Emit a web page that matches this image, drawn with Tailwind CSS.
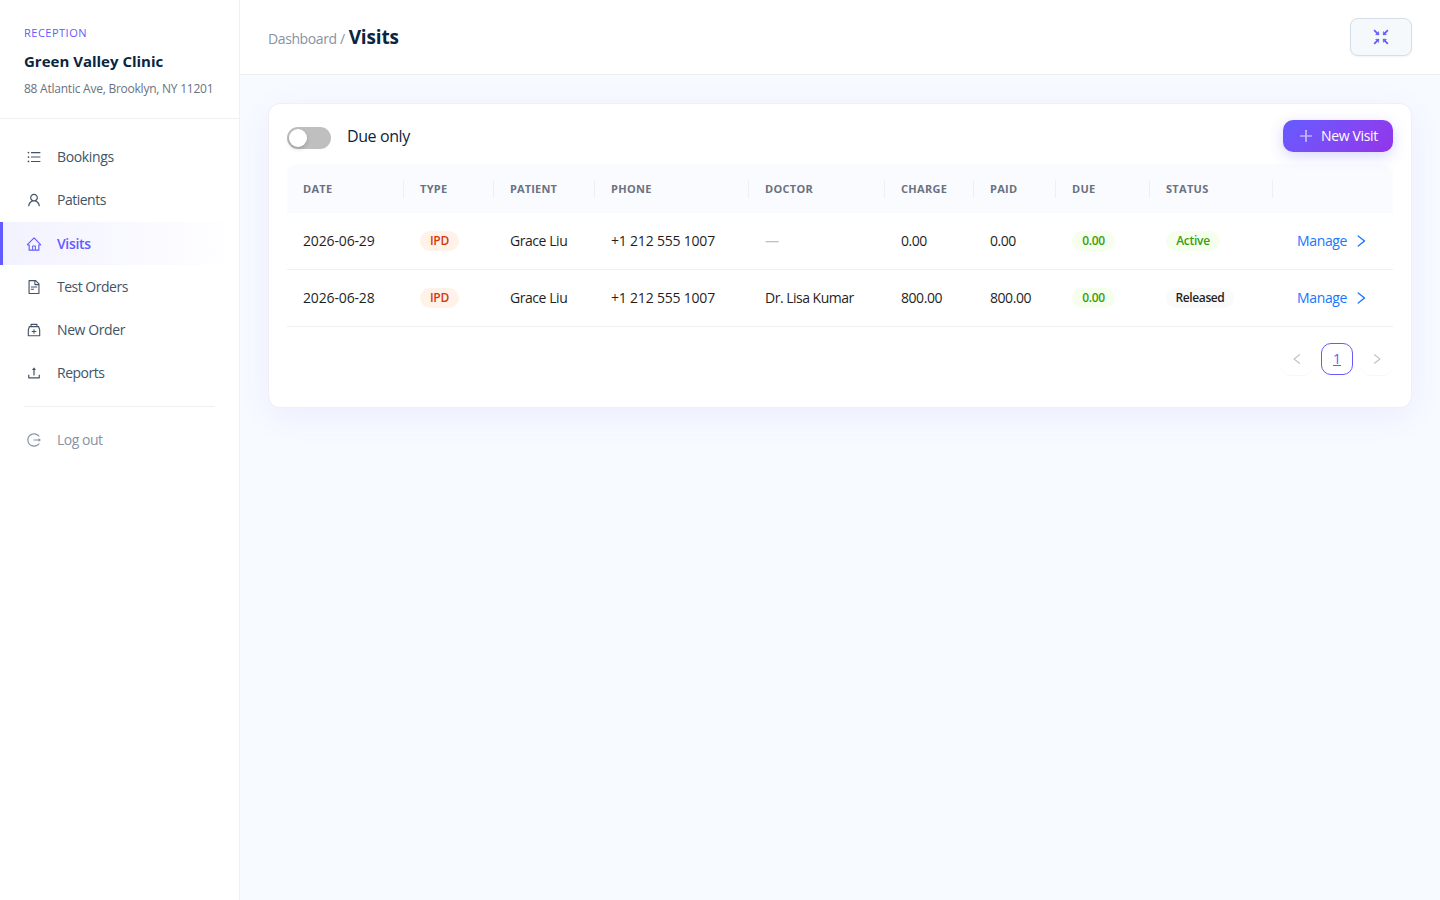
<!DOCTYPE html>
<html lang="en">
<head>
    <meta charset="UTF-8">
    <meta name="viewport" content="width=device-width, initial-scale=1.0">
    <title>Visits - Green Valley Clinic</title>
    <script src="https://cdn.jsdelivr.net/npm/@tailwindcss/browser@4"></script>
</head>
<body class="flex h-screen overflow-hidden bg-[#f7faff] font-['Open_Sans',sans-serif] text-sm text-[#1f1f1f]">
    <!-- Sidebar -->
    <aside class="w-60 shrink-0 border-r border-[#f0f0f0] bg-white">
        <div class="flex h-[119px] flex-col border-b border-[#edeff3] px-6 pt-6 whitespace-nowrap">
            <p class="text-[11px] leading-[18px] font-medium tracking-[0.5px] text-[#635bff]">RECEPTION</p>
            <h1 class="mt-[7px] text-[15px] leading-6 font-bold text-[#0a2540]">Green Valley Clinic</h1>
            <p class="mt-[6px] text-xs leading-[19px] tracking-[-0.24px] text-[#6b7280]">88 Atlantic Ave, Brooklyn, NY 11201</p>
        </div>
        <nav class="pt-[16.6px] tracking-[-0.5px] text-[#425466]">
            <a class="flex h-[43.2px] items-center gap-[15px] pl-[26px]">
                <svg class="size-4" viewBox="0 0 1024 1024" fill="currentColor"><path d="M912 192H328c-4.4 0-8 3.6-8 8v56c0 4.4 3.6 8 8 8h584c4.4 0 8-3.6 8-8v-56c0-4.4-3.6-8-8-8zm0 284H328c-4.4 0-8 3.6-8 8v56c0 4.4 3.6 8 8 8h584c4.4 0 8-3.6 8-8v-56c0-4.4-3.6-8-8-8zm0 284H328c-4.4 0-8 3.6-8 8v56c0 4.4 3.6 8 8 8h584c4.4 0 8-3.6 8-8v-56c0-4.4-3.6-8-8-8zM104 228a56 56 0 10112 0 56 56 0 10-112 0zm0 284a56 56 0 10112 0 56 56 0 10-112 0zm0 284a56 56 0 10112 0 56 56 0 10-112 0z"/></svg>
                <span class="tracking-[-0.35px]">Bookings</span>
            </a>
            <a class="flex h-[43.2px] items-center gap-[15px] pl-[26px]">
                <svg class="size-4" viewBox="0 0 1024 1024" fill="currentColor"><path d="M858.5 763.6a374 374 0 00-80.6-119.5 375.63 375.63 0 00-119.5-80.6c-.4-.2-.8-.3-1.2-.5C719.5 518 760 444.7 760 362c0-137-111-248-248-248S264 225 264 362c0 82.7 40.5 156 102.8 201.1-.4.2-.8.3-1.2.5-44.8 18.9-85 46-119.5 80.6a375.63 375.63 0 00-80.6 119.5A371.7 371.7 0 00136 901.8a8 8 0 008 8.2h60c4.4 0 7.9-3.5 8-7.8 2-77.2 33-149.5 87.8-204.3 56.7-56.7 132-87.9 212.2-87.9s155.5 31.2 212.2 87.9C779 752.7 810 825 812 902.2c.1 4.4 3.6 7.8 8 7.8h60a8 8 0 008-8.2c-1-47.8-10.9-94.3-29.5-138.2zM512 534c-45.9 0-89.1-17.9-121.6-50.4S340 407.9 340 362c0-45.9 17.9-89.1 50.4-121.6S466.1 190 512 190s89.1 17.9 121.6 50.4S684 316.1 684 362c0 45.9-17.9 89.1-50.4 121.6S557.9 534 512 534z"/></svg>
                <span>Patients</span>
            </a>
            <a class="flex h-[43.2px] items-center gap-[15px] border-l-3 border-[#635bff] bg-linear-to-r from-[#635bff]/8 to-transparent pl-[23px] font-semibold text-[#635bff]">
                <svg class="size-4" viewBox="0 0 1024 1024" fill="currentColor"><path d="M946.5 505L560.1 118.8l-25.9-25.9a31.5 31.5 0 00-44.4 0L77.5 505a63.9 63.9 0 00-18.8 46c.4 35.2 29.7 63.3 64.9 63.3h42.5V940h691.8V614.3h43.4c17.1 0 33.2-6.7 45.3-18.8a63.6 63.6 0 0018.7-45.3c0-17-6.7-33.1-18.8-45.2zM568 868H456V664h112v204zm217.9-325.7V868H632V640c0-22.1-17.9-40-40-40H432c-22.1 0-40 17.9-40 40v228H238.1V542.3h-96l370-369.7 23.1 23.1L882 542.3h-96.1z"/></svg>
                <span class="pt-px tracking-[-0.35px]">Visits</span>
            </a>
            <a class="flex h-[43.2px] items-center gap-[15px] pl-[26px]">
                <svg class="size-4" viewBox="0 0 1024 1024" fill="currentColor"><path d="M854.6 288.6L639.4 73.4c-6-6-14.1-9.4-22.6-9.4H192c-17.7 0-32 14.3-32 32v832c0 17.7 14.3 32 32 32h640c17.7 0 32-14.3 32-32V311.3c0-8.5-3.4-16.7-9.4-22.7zM790.2 326H602V137.8L790.2 326zm1.8 562H232V136h302v216a42 42 0 0042 42h216v494zM504 618H320c-4.4 0-8 3.6-8 8v48c0 4.4 3.6 8 8 8h184c4.4 0 8-3.6 8-8v-48c0-4.4-3.6-8-8-8zM312 490v48c0 4.4 3.6 8 8 8h384c4.4 0 8-3.6 8-8v-48c0-4.4-3.6-8-8-8H320c-4.4 0-8 3.6-8 8z"/></svg>
                <span>Test Orders</span>
            </a>
            <a class="flex h-[43.2px] items-center gap-[15px] pl-[26px]">
                <svg class="size-4" viewBox="0 0 1024 1024" fill="currentColor"><path d="M839.2 278.1a32 32 0 00-30.4-22.1H736V144c0-17.7-14.3-32-32-32H320c-17.7 0-32 14.3-32 32v112h-72.8a31.9 31.9 0 00-30.4 22.1L112 502v378c0 17.7 14.3 32 32 32h736c17.7 0 32-14.3 32-32V502l-72.8-223.9zM360 184h304v72H360v-72zm480 656H184V513.4L244.3 328h535.4L840 513.4V840zM652 572H544V464c0-4.4-3.6-8-8-8h-48c-4.4 0-8 3.6-8 8v108H372c-4.4 0-8 3.6-8 8v48c0 4.4 3.6 8 8 8h108v108c0 4.4 3.6 8 8 8h48c4.4 0 8-3.6 8-8V636h108c4.4 0 8-3.6 8-8v-48c0-4.4-3.6-8-8-8z"/></svg>
                <span class="tracking-[-0.4px]">New Order</span>
            </a>
            <a class="flex h-[43.2px] items-center gap-[15px] pl-[26px]">
                <svg class="size-4" viewBox="0 0 1024 1024" fill="currentColor"><path d="M400 317.7h73.9V656c0 4.4 3.6 8 8 8h60c4.4 0 8-3.6 8-8V317.7H624c6.7 0 10.4-7.7 6.3-12.9L518.3 163a8 8 0 00-12.6 0l-112 141.7c-4.1 5.3-.4 13 6.3 13zM878 626h-60c-4.4 0-8 3.6-8 8v154H214V634c0-4.4-3.6-8-8-8h-60c-4.4 0-8 3.6-8 8v198c0 17.7 14.3 32 32 32h684c17.7 0 32-14.3 32-32V634c0-4.4-3.6-8-8-8z"/></svg>
                <span>Reports</span>
            </a>
            <hr class="mx-6 mt-[11px] mb-3 border-[#edeff2]">
            <a class="flex h-[43.2px] items-center gap-[15px] pl-[26px] text-[#8792a2]">
                <svg class="size-4" viewBox="0 0 1024 1024" fill="currentColor"><path d="M868 732h-70.3c-4.8 0-9.3 2.1-12.3 5.8-7 8.5-14.5 16.7-22.4 24.5a353.84 353.84 0 01-112.7 75.9A352.8 352.8 0 01512.4 866c-47.9 0-94.3-9.4-137.9-27.8a353.84 353.84 0 01-112.7-75.9 353.28 353.28 0 01-76-112.5C167.3 606.2 158 559.9 158 512s9.4-94.2 27.8-137.8c17.8-42.1 43.4-80 76-112.5s70.5-58.1 112.7-75.9c43.6-18.4 90-27.8 137.9-27.8 47.9 0 94.3 9.3 137.9 27.8 42.2 17.8 80.1 43.4 112.7 75.9 7.9 7.9 15.3 16.1 22.4 24.5 3 3.7 7.6 5.8 12.3 5.8H868c6.3 0 10.2-7 6.7-12.3C798 160.5 663.8 81.6 511.3 82 271.7 82.6 79.6 277.1 82 516.4 84.4 751.9 276.2 942 512.4 942c152.1 0 285.7-78.8 362.3-197.7 3.4-5.3-.4-12.3-6.7-12.3zm88.9-226.3L815 393.7c-5.3-4.2-13-.4-13 6.3v76H488c-4.4 0-8 3.6-8 8v56c0 4.4 3.6 8 8 8h314v76c0 6.7 7.8 10.5 13 6.3l141.9-112a8 8 0 000-12.6z"/></svg>
                <span>Log out</span>
            </a>
        </nav>
    </aside>

    <div class="flex min-w-0 flex-1 flex-col">
        <!-- Top bar -->
        <header class="flex h-[75px] shrink-0 items-center justify-between border-b border-[#edeff3] bg-white px-7">
            <div class="flex items-baseline gap-1 whitespace-nowrap">
                <span class="tracking-[-0.4px] text-[#8792a2]">Dashboard /</span>
                <h2 class="text-[19px] leading-7 font-bold tracking-[-0.15px] text-[#0a2540]">Visits</h2>
            </div>
            <button class="flex h-[38px] w-[62px] items-center justify-center rounded-lg border border-[#d5dfea] bg-[#f6f9fc] text-[#635bff] shadow-[0_1px_2px_rgba(10,37,64,0.06)]">
                <svg class="size-5" viewBox="0 0 1024 1024" fill="currentColor" stroke="currentColor" stroke-width="20"><path d="M391 240.9c-.8-6.6-8.9-9.4-13.6-4.7l-43.7 43.7L200 146.3a8.03 8.03 0 00-11.3 0l-42.4 42.3a8.03 8.03 0 000 11.3L280 333.6l-43.9 43.9a8.01 8.01 0 004.7 13.6L401 410c5.1.6 9.5-3.7 8.9-8.9L391 240.9zm10.1 373.2L240.8 633c-6.6.8-9.4 8.9-4.7 13.6l43.9 43.9L146.3 824a8.03 8.03 0 000 11.3l42.4 42.3c3.1 3.1 8.2 3.1 11.3 0L333.7 744l43.7 43.7A8.01 8.01 0 00391 783l18.9-160.1c.6-5.1-3.7-9.4-8.8-8.8zm221.8-204.2L783.2 391c6.6-.8 9.4-8.9 4.7-13.6L744 333.6 877.7 200c3.1-3.1 3.1-8.2 0-11.3l-42.4-42.3a8.03 8.03 0 00-11.3 0L690.3 279.9l-43.7-43.7a8.01 8.01 0 00-13.6 4.7L614.1 401c-.6 5.2 3.7 9.5 8.8 8.9zM744 690.4l43.9-43.9a8.01 8.01 0 00-4.7-13.6L623 614c-5.1-.6-9.5 3.7-8.9 8.9L633 783.1c.8 6.6 8.9 9.4 13.6 4.7l43.7-43.7L824 877.7c3.1 3.1 8.2 3.1 11.3 0l42.4-42.3c3.1-3.1 3.1-8.2 0-11.3L744 690.4z"/></svg>
            </button>
        </header>

        <main class="px-7 pt-7">
            <section class="h-[305px] rounded-xl border border-[#eef0f6] bg-white px-[18px] pt-4 shadow-[0_8px_32px_rgba(99,91,255,0.08)]">
                <div class="flex h-[44px] items-start justify-between">
                    <div class="flex items-center gap-4">
                        <button class="mt-[3px] flex h-[22px] w-11 items-center rounded-full bg-[#bfbfbf] pl-0.5">
                            <span class="size-[18px] rounded-full bg-white shadow-[0_2px_4px_rgba(0,35,11,0.2)]"></span>
                        </button>
                        <span class="text-base leading-8 tracking-[-0.4px] text-[#0a2540]">Due only</span>
                    </div>
                    <button class="flex h-8 w-[110px] items-center justify-center gap-[7px] rounded-[10px] bg-linear-135 from-[#635bff] to-[#9333ea] text-white shadow-[0_4px_14px_rgba(99,91,255,0.25)]">
                        <svg class="size-4" viewBox="0 0 1024 1024" fill="currentColor" fill-opacity="0.85"><path d="M482 132h60q8 0 8 8v744q0 8-8 8h-60q-8 0-8-8V140q0-8 8-8z"/><path d="M140 474h334v76H140q-8 0-8-8v-60q0-8 8-8zM550 474h334q8 0 8 8v60q0 8-8 8H550z"/></svg>
                        <span class="tracking-[-0.35px] whitespace-nowrap">New Visit</span>
                    </button>
                </div>

                <table class="w-[1106px] table-fixed border-separate border-spacing-0 whitespace-nowrap">
                    <colgroup>
                        <col class="w-[117px]">
                        <col class="w-[90px]">
                        <col class="w-[101px]">
                        <col class="w-[154px]">
                        <col class="w-[136px]">
                        <col class="w-[89px]">
                        <col class="w-[82px]">
                        <col class="w-[94px]">
                        <col class="w-[123px]">
                        <col class="w-[120px]">
                    </colgroup>
                    <thead>
                        <tr class="h-[49px] text-left text-[11px] tracking-[0.3px] text-[#6b7280]">
                            <th class="rounded-tl-xl bg-[#fafbff] p-0"><div class="flex h-[18px] items-center border-r border-[#f0f0f0] pl-4">DATE</div></th>
                            <th class="bg-[#fafbff] p-0"><div class="flex h-[18px] items-center border-r border-[#f0f0f0] pl-4">TYPE</div></th>
                            <th class="bg-[#fafbff] p-0"><div class="flex h-[18px] items-center border-r border-[#f0f0f0] pl-4 tracking-[0.15px]">PATIENT</div></th>
                            <th class="bg-[#fafbff] p-0"><div class="flex h-[18px] items-center border-r border-[#f0f0f0] pl-4">PHONE</div></th>
                            <th class="bg-[#fafbff] p-0"><div class="flex h-[18px] items-center border-r border-[#f0f0f0] pl-4">DOCTOR</div></th>
                            <th class="bg-[#fafbff] p-0"><div class="flex h-[18px] items-center border-r border-[#f0f0f0] pl-4">CHARGE</div></th>
                            <th class="bg-[#fafbff] p-0"><div class="flex h-[18px] items-center border-r border-[#f0f0f0] pl-4">PAID</div></th>
                            <th class="bg-[#fafbff] p-0"><div class="flex h-[18px] items-center border-r border-[#f0f0f0] pl-4">DUE</div></th>
                            <th class="bg-[#fafbff] p-0"><div class="flex h-[18px] items-center border-r border-[#f0f0f0] pl-4">STATUS</div></th>
                            <th class="rounded-tr-xl bg-[#fafbff] p-0"></th>
                        </tr>
                    </thead>
                    <tbody class="[&_td]:border-b [&_td]:border-[#f0f0f0]">
                        <tr class="h-[57px]">
                            <td class="pl-4 tracking-[-0.15px]">2026-06-29</td>
                            <td class="pl-4"><span class="flex h-5 w-[39px] items-center justify-center rounded-full bg-[#fff2e8] text-xs font-semibold tracking-[-0.2px] text-[#d4380d]">IPD</span></td>
                            <td class="pl-4 tracking-[-0.45px]">Grace Liu</td>
                            <td class="pl-4 tracking-[-0.2px]">+1 212 555 1007</td>
                            <td class="pl-4 text-[#bfbfbf]">—</td>
                            <td class="pl-4 tracking-[-0.45px]">0.00</td>
                            <td class="pl-4 tracking-[-0.45px]">0.00</td>
                            <td class="pl-4"><span class="flex h-5 w-[43px] items-center justify-center rounded-full bg-[#f6ffed] text-xs font-semibold tracking-[-0.3px] text-[#389e0d]">0.00</span></td>
                            <td class="pl-4"><span class="flex h-5 w-[54px] items-center justify-center rounded-full bg-[#f6ffed] text-xs font-semibold tracking-[-0.3px] text-[#389e0d]">Active</span></td>
                            <td class="pl-6 text-[#1677ff]"><div class="flex items-center gap-1.5"><span class="tracking-[-0.35px]">Manage</span><svg class="size-4" viewBox="0 0 1024 1024" fill="currentColor"><path d="M765.7 486.8L314.9 134.7A7.97 7.97 0 00302 141v77.3c0 4.9 2.3 9.6 6.1 12.6l360 281.1-360 281.1c-3.9 3-6.1 7.7-6.1 12.6V883c0 6.7 7.7 10.4 12.9 6.3l450.8-352.1a31.96 31.96 0 000-50.4z"/></svg></div></td>
                        </tr>
                        <tr class="h-[57px]">
                            <td class="pl-4 tracking-[-0.15px]">2026-06-28</td>
                            <td class="pl-4"><span class="flex h-5 w-[39px] items-center justify-center rounded-full bg-[#fff2e8] text-xs font-semibold tracking-[-0.2px] text-[#d4380d]">IPD</span></td>
                            <td class="pl-4 tracking-[-0.45px]">Grace Liu</td>
                            <td class="pl-4 tracking-[-0.2px]">+1 212 555 1007</td>
                            <td class="pl-4 tracking-[-0.5px]">Dr. Lisa Kumar</td>
                            <td class="pl-4 tracking-[-0.45px]">800.00</td>
                            <td class="pl-4 tracking-[-0.45px]">800.00</td>
                            <td class="pl-4"><span class="flex h-5 w-[43px] items-center justify-center rounded-full bg-[#f6ffed] text-xs font-semibold tracking-[-0.3px] text-[#389e0d]">0.00</span></td>
                            <td class="pl-4"><span class="flex h-5 w-[68px] items-center justify-center rounded-full bg-[#fafafa] text-xs font-semibold tracking-[-0.4px]">Released</span></td>
                            <td class="pl-6 text-[#1677ff]"><div class="flex items-center gap-1.5"><span class="tracking-[-0.35px]">Manage</span><svg class="size-4" viewBox="0 0 1024 1024" fill="currentColor"><path d="M765.7 486.8L314.9 134.7A7.97 7.97 0 00302 141v77.3c0 4.9 2.3 9.6 6.1 12.6l360 281.1-360 281.1c-3.9 3-6.1 7.7-6.1 12.6V883c0 6.7 7.7 10.4 12.9 6.3l450.8-352.1a31.96 31.96 0 000-50.4z"/></svg></div></td>
                        </tr>
                    </tbody>
                </table>

                <!-- Pagination -->
                <div class="mt-4 flex justify-end gap-2">
                    <button class="flex size-8 items-center justify-center rounded-[10px] bg-white text-[#bfbfbf] shadow-[0_1px_1px_rgba(0,0,0,0.04)]">
                        <svg class="size-3.5" viewBox="0 0 1024 1024" fill="currentColor"><path d="M724 218.3V141c0-6.7-7.7-10.4-12.9-6.3L260.3 486.8a31.86 31.86 0 000 50.3l450.8 352.1c5.3 4.1 12.9.4 12.9-6.3v-77.3c0-4.9-2.3-9.6-6.1-12.6l-360-281 360-281.1c3.8-3 6.1-7.7 6.1-12.6z"/></svg>
                    </button>
                    <button class="flex size-8 items-center justify-center rounded-[10px] border border-[#635bff] bg-white text-[#635bff] underline">1</button>
                    <button class="flex size-8 items-center justify-center rounded-[10px] bg-white text-[#bfbfbf] shadow-[0_1px_1px_rgba(0,0,0,0.04)]">
                        <svg class="size-3.5" viewBox="0 0 1024 1024" fill="currentColor"><path d="M765.7 486.8L314.9 134.7A7.97 7.97 0 00302 141v77.3c0 4.9 2.3 9.6 6.1 12.6l360 281.1-360 281.1c-3.9 3-6.1 7.7-6.1 12.6V883c0 6.7 7.7 10.4 12.9 6.3l450.8-352.1a31.96 31.96 0 000-50.4z"/></svg>
                    </button>
                </div>
            </section>
        </main>
    </div>
</body>
</html>
